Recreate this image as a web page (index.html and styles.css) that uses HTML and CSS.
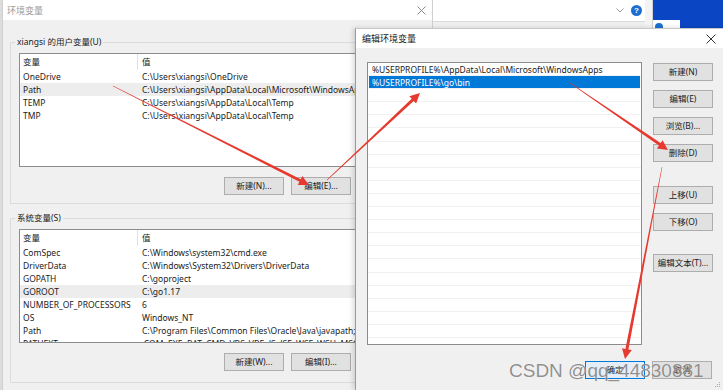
FILE: index.html
```html
<!DOCTYPE html>
<html lang="zh-CN">
<head>
  <meta charset="UTF-8" />
  <title>编辑环境变量</title>
  <link rel="stylesheet" href="styles.css">
</head>
<body>

<div id="desktop">

  <div id="back-window">
    <div class="back-bar">
      <svg class="chevron" width="8" height="5" viewBox="0 0 8 5"><polyline points="0.5,0.5 4,4 7.5,0.5" fill="none" stroke="#9a9a9a" stroke-width="1"/></svg>
      <span class="help-icon">?</span>
    </div>
  </div>

  <div id="wallpaper">
    <div class="tile tile-a"></div>
    <div class="tile tile-b"><span class="dot"></span></div>
  </div>

  <!-- 环境变量 -->
  <div id="env-dialog" class="dialog">
    <div class="titlebar inactive">
      <span class="title">环境变量</span>
      <svg class="close" width="9" height="9" viewBox="0 0 9 9"><path d="M0.5 0.5 L8.5 8.5 M8.5 0.5 L0.5 8.5" stroke="#8a8a8a" stroke-width="1"/></svg>
    </div>
    <div class="env-body">
      <fieldset class="group">
        <legend>xiangsi 的用户变量(U)</legend>
        <div class="var-list user-list">
          <div class="var-row head"><span class="name">变量</span><span class="value">值</span></div>
          <div class="var-row"><span class="name">OneDrive</span><span class="value">C:\Users\xiangsi\OneDrive</span></div>
          <div class="var-row hover"><span class="name">Path</span><span class="value">C:\Users\xiangsi\AppData\Local\Microsoft\WindowsApps;%USERPROFILE%\go\bin;</span></div>
          <div class="var-row"><span class="name">TEMP</span><span class="value">C:\Users\xiangsi\AppData\Local\Temp</span></div>
          <div class="var-row"><span class="name">TMP</span><span class="value">C:\Users\xiangsi\AppData\Local\Temp</span></div>
        </div>
        <div class="btn-row">
          <button class="btn">新建(N)...</button>
          <button class="btn">编辑(E)...</button>
          <button class="btn">删除(D)</button>
        </div>
      </fieldset>

      <fieldset class="group">
        <legend>系统变量(S)</legend>
        <div class="var-list sys-list">
          <div class="var-row head"><span class="name">变量</span><span class="value">值</span></div>
          <div class="var-row"><span class="name">ComSpec</span><span class="value">C:\Windows\system32\cmd.exe</span></div>
          <div class="var-row"><span class="name">DriverData</span><span class="value">C:\Windows\System32\Drivers\DriverData</span></div>
          <div class="var-row"><span class="name">GOPATH</span><span class="value">C:\goproject</span></div>
          <div class="var-row hover"><span class="name">GOROOT</span><span class="value">C:\go1.17</span></div>
          <div class="var-row"><span class="name">NUMBER_OF_PROCESSORS</span><span class="value">6</span></div>
          <div class="var-row"><span class="name">OS</span><span class="value">Windows_NT</span></div>
          <div class="var-row"><span class="name">Path</span><span class="value">C:\Program Files\Common Files\Oracle\Java\javapath;C:\Windows\system32;</span></div>
          <div class="var-row"><span class="name">PATHEXT</span><span class="value">.COM;.EXE;.BAT;.CMD;.VBS;.VBE;.JS;.JSE;.WSF;.WSH;.MSC</span></div>
        </div>
        <div class="btn-row">
          <button class="btn">新建(W)...</button>
          <button class="btn">编辑(I)...</button>
          <button class="btn">删除(L)</button>
        </div>
      </fieldset>
    </div>
  </div>

  <!-- 编辑环境变量 -->
  <div id="edit-dialog" class="dialog">
    <div class="titlebar">
      <span class="title">编辑环境变量</span>
      <svg class="close" width="10" height="10" viewBox="0 0 10 10"><path d="M0.5 0.5 L9.5 9.5 M9.5 0.5 L0.5 9.5" stroke="#333" stroke-width="1"/></svg>
    </div>
    <div class="edit-body">
      <div class="edit-main">
        <div class="path-list">
          <div class="path-item">%USERPROFILE%\AppData\Local\Microsoft\WindowsApps</div>
          <div class="path-item selected">%USERPROFILE%\go\bin</div>
          <div class="path-item"></div><div class="path-item"></div><div class="path-item"></div><div class="path-item"></div>
          <div class="path-item"></div><div class="path-item"></div><div class="path-item"></div><div class="path-item"></div>
          <div class="path-item"></div><div class="path-item"></div><div class="path-item"></div><div class="path-item"></div>
          <div class="path-item"></div><div class="path-item"></div><div class="path-item"></div><div class="path-item"></div>
          <div class="path-item"></div><div class="path-item"></div><div class="path-item"></div>
        </div>
        <div class="btn-col">
          <button class="btn">新建(N)</button>
          <button class="btn">编辑(E)</button>
          <button class="btn">浏览(B)...</button>
          <button class="btn">删除(D)</button>
          <button class="btn move-up">上移(U)</button>
          <button class="btn">下移(O)</button>
          <button class="btn edit-text">编辑文本(T)...</button>
        </div>
      </div>
      <div class="edit-footer">
        <button class="btn default">确定</button>
        <button class="btn">取消</button>
      </div>
      <svg class="grip" width="6" height="6" viewBox="0 0 6 6"><rect x="4" y="0" width="1" height="1" fill="#aaa"/><rect x="2" y="2" width="1" height="1" fill="#aaa"/><rect x="4" y="2" width="1" height="1" fill="#aaa"/><rect x="0" y="4" width="1" height="1" fill="#aaa"/><rect x="2" y="4" width="1" height="1" fill="#aaa"/><rect x="4" y="4" width="1" height="1" fill="#aaa"/></svg>
    </div>
  </div>

  <!-- 标注箭头 -->
  <svg id="arrows" width="723" height="390" viewBox="0 0 723 390">
    <g fill="#e63a30">
      <polygon points="112.9,86.2 299.4,181.8 297.8,185 309,185 302.3,176 300.8,179.2 113.1,85.8"/>
      <polygon points="327.2,180.2 413.7,100.9 416.1,103.5 420,93 409.3,96.2 411.7,98.7 326.8,179.8"/>
      <polygon points="569.9,83.2 658.9,145.6 656.9,148.5 668,150 662.6,140.2 660.6,143.1 570.1,82.8"/>
      <polygon points="661.8,167 625.4,348.9 622,348.2 625,359 631.8,350.1 628.4,349.5 662.3,167.1"/>
    </g>
  </svg>

  <div class="watermark">CSDN @qq_44830881</div>
</div>

</body>
</html>
```

FILE: styles.css
```css
html, body {
  margin: 0; padding: 0;
  width: 723px; height: 390px;
  overflow: hidden;
  font-family: "Noto Sans", "Noto Sans CJK SC", sans-serif;
  font-size: 8.5px;
  color: #1a1a1a;
  background: #dcdcdc;
}

#desktop {
  position: relative;
  width: 723px; height: 390px;
  overflow: hidden;
}

/* window behind, top right */
#back-window {
  position: absolute;
  left: 433px; top: 0;
  width: 212px; height: 28px;
  background: #f0f0f0;
}

.back-bar {
  height: 22px;
  background: #fff;
  border-bottom: 1px solid #dadada;
  box-sizing: border-box;
  display: flex;
  align-items: center;
  justify-content: flex-end;
  padding-right: 3px;
  gap: 7px;
}

.help-icon {
  width: 11px; height: 11px;
  border-radius: 50%;
  background: #1c6fd1;
  color: #fff;
  font: bold 8px/11px "Liberation Sans", sans-serif;
  text-align: center;
}

#wallpaper {
  position: absolute;
  left: 645px; top: 0;
  width: 78px; height: 28px;
  background: #0a46c4;
}

.tile { position: absolute; background: #f3f3f3; }
.tile-a { left: 0; top: 0; width: 7px; height: 28px; border-right: 1px solid #d0d0d0; }
.tile-b { left: 8px; top: 20px; width: 27px; height: 8px; background: #fff; overflow: hidden; }
.tile-b .dot {
  position: absolute;
  left: 2px; top: 3px;
  width: 8px; height: 8px;
  border-radius: 50%;
  background: #1c6fd1;
}

/* dialogs */
.dialog {
  position: absolute;
  background: #f0f0f0;
  box-sizing: border-box;
}

.titlebar {
  height: 20px;
  background: #fff;
  display: flex;
  align-items: center;
  justify-content: space-between;
  padding: 0 7px 0 6px;
  font-size: 9px;
}

.titlebar.inactive .title { color: #9a9a9a; }

#env-dialog {
  left: 2px; top: 0;
  width: 431px; height: 390px;
  border-left: 1px solid #cfcfcf;
  border-right: 1px solid #cfcfcf;
}

#env-dialog .titlebar { padding: 0 6px 0 4px; }

.env-body {
  padding: 16px 4px 0 7px;
  display: flex;
  flex-direction: column;
  gap: 8px;
}

.group {
  margin: 0;
  min-width: 0;
  border: 1px solid #dcdcdc;
  padding: 5px 7px 8px 8px;
  width: 416px;
  box-sizing: border-box;
}

.group + .group { padding-bottom: 11px; }

.group legend {
  margin-left: -4px;
  padding: 0 2px;
  line-height: 12px;
  color: #1a1a1a;
}

.var-list {
  background: #fff;
  border: 1px solid #8c8c8c;
  height: 114px;
  box-sizing: border-box;
  overflow: hidden;
}

.var-row {
  display: flex;
  height: 13px;
  line-height: 13px;
  white-space: nowrap;
}

.var-row.head { height: 16px; line-height: 16px; }
.var-row.hover { background: #ededed; }

.var-row .name {
  width: 118px;
  flex-shrink: 0;
  padding-left: 3px;
  box-sizing: border-box;
}

.var-row.head .name { border-right: 1px solid #e3e3e3; }
.var-row .value { padding-left: 4px; }

.btn-row {
  display: flex;
  justify-content: flex-end;
  gap: 7px;
  margin-top: 10px;
}

.btn {
  width: 60px; height: 18px;
  margin: 0; padding: 0;
  background: #e1e1e1;
  border: 1px solid #adadad;
  font: inherit;
  color: #1a1a1a;
  line-height: 16px;
  box-sizing: border-box;
}

.btn.default {
  border-color: #0078d7;
  background: #e5eef7;
}

#edit-dialog {
  left: 355px; top: 28px;
  width: 368px; height: 362px;
  border-left: 1px solid #9a9a9a;
  border-top: 1px solid #c8c8c8;
  box-shadow: -2px 0 5px rgba(0,0,0,0.15);
}

#edit-dialog .titlebar { height: 19px; color: #1a1a1a; }

.edit-body {
  position: relative;
  height: 342px;
  padding: 14px 10px 0 11px;
  box-sizing: border-box;
}

.edit-main {
  display: flex;
  gap: 11px;
}

.path-list {
  width: 275px; height: 283px;
  background: #fff;
  border: 1px solid #8c8c8c;
  box-sizing: border-box;
  overflow: hidden;
}

.path-item {
  height: 13.1px;
  line-height: 13px;
  padding-left: 4px;
  border-bottom: 1px solid #f1f1f1;
  box-sizing: border-box;
  white-space: nowrap;
}

.path-item.selected {
  background: #0078d7;
  color: #fff;
  margin: 0 1px;
  padding-left: 3px;
}

.btn-col {
  display: flex;
  flex-direction: column;
  gap: 9px;
  padding-top: 1px;
}

.btn-col .move-up { margin-top: 15px; }
.btn-col .edit-text { margin-top: 14px; }

.edit-footer {
  display: flex;
  justify-content: flex-end;
  gap: 7px;
  margin-top: 16px;
  padding-right: 1px;
}

.grip {
  position: absolute;
  right: 2px; bottom: 2px;
}

#arrows {
  position: absolute;
  left: 0; top: 0;
  pointer-events: none;
}

.watermark {
  position: absolute;
  left: 509px; top: 361px;
  font: 19px/19px "Liberation Sans", Arial, sans-serif;
  color: rgba(95,95,95,0.7);
  text-shadow: 0 0 1px rgba(255,255,255,0.9);
  white-space: nowrap;
  pointer-events: none;
}
```
